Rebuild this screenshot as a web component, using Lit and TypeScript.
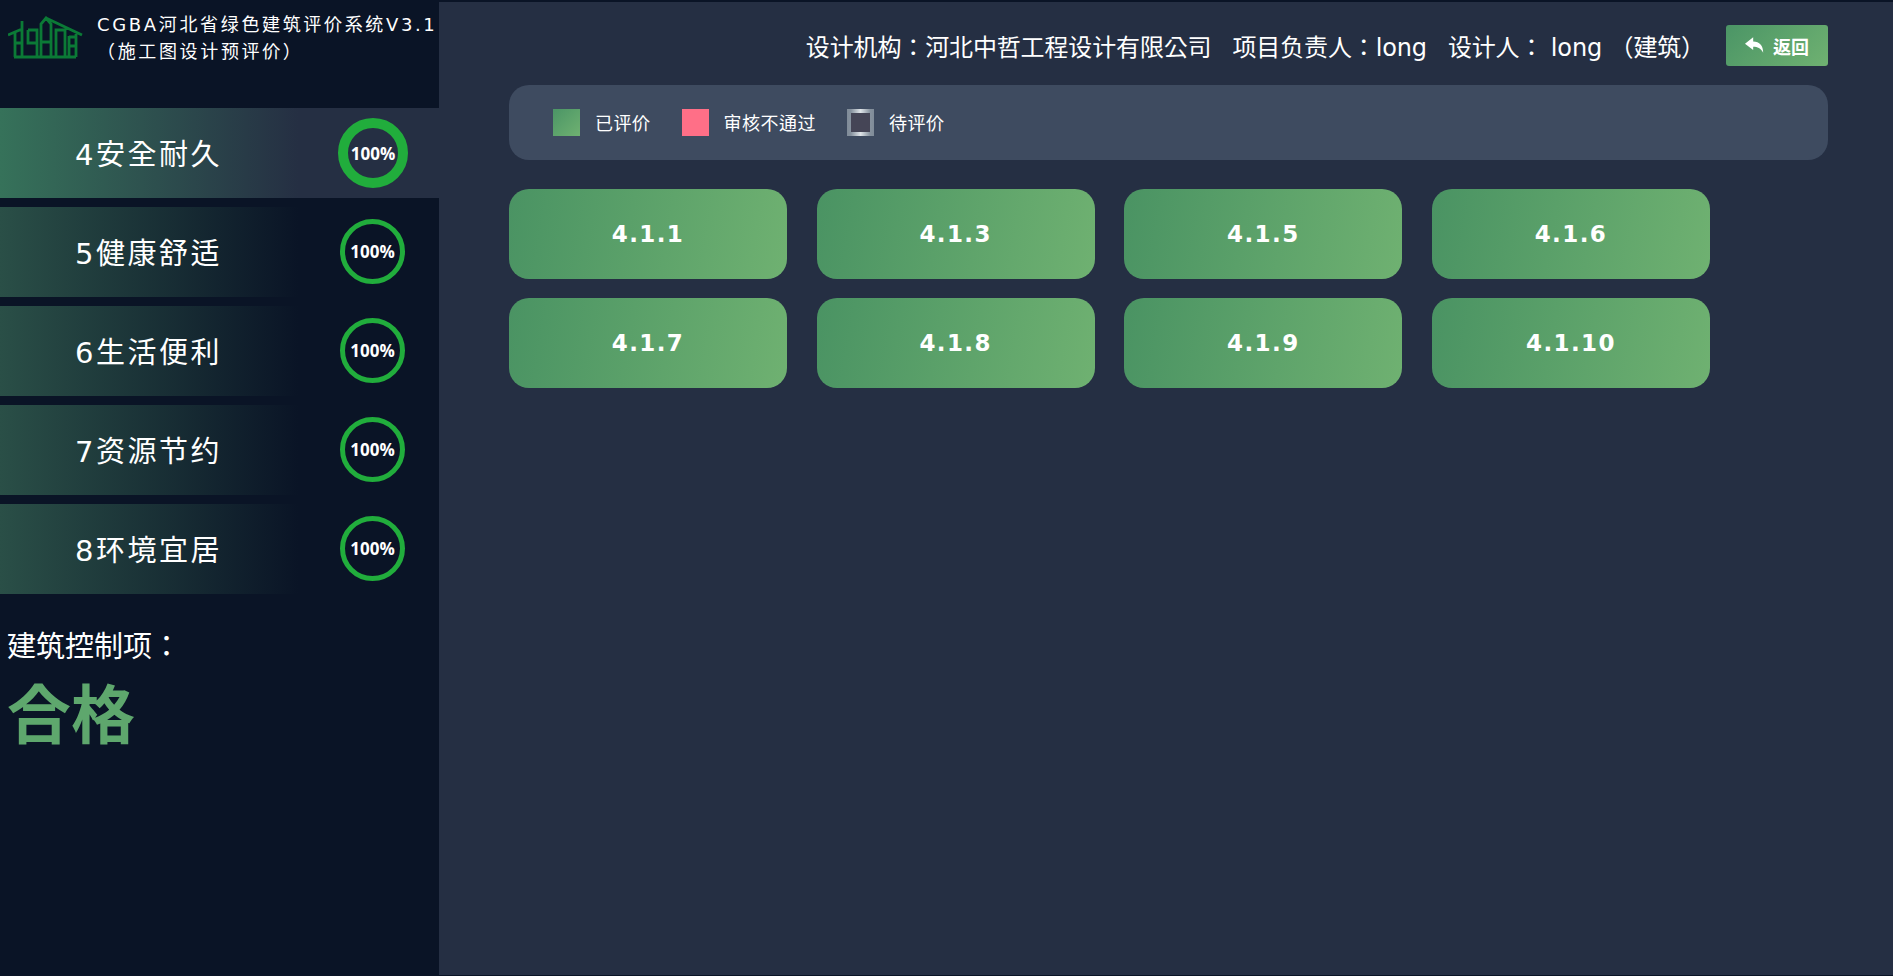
import { LitElement, html, css } from "lit";
import { customElement } from "lit/decorators.js";

const NAV = [
  { t: "4安全耐久", active: true },
  { t: "5健康舒适" },
  { t: "6生活便利" },
  { t: "7资源节约" },
  { t: "8环境宜居" },
];
const CARDS = ["4.1.1", "4.1.3", "4.1.5", "4.1.6", "4.1.7", "4.1.8", "4.1.9", "4.1.10"];

@customElement("app-root")
export class AppRoot extends LitElement {
  static styles = css`
    :host {
      display: block;
      width: 1893px;
      height: 976px;
      overflow: hidden;
      background: #0a1426;
      font-family: "DejaVu Sans", "Noto Sans CJK KR", sans-serif;
      color: #fff;
    }
    .page {
      display: flex;
      height: 973px;
      padding-top: 2px;
    }
    .side {
      width: 439px;
      flex: none;
      background: #0a1426;
    }
    .brand {
      height: 106px;
      display: flex;
      align-items: flex-start;
      box-sizing: border-box;
      padding: 9px 0 0 8px;
    }
    .logo {
      width: 75px;
      height: 43px;
      margin-top: 5px;
      flex: none;
    }
    .brand-text {
      margin-left: 14px;
      font-size: 18px;
      line-height: 27px;
      letter-spacing: 2.65px;
      white-space: nowrap;
    }
    .nav {
      display: flex;
      flex-direction: column;
      gap: 9px;
    }
    .item {
      height: 90px;
      display: flex;
      align-items: center;
      position: relative;
      background: linear-gradient(90deg, #2a4f47 0%, #0a1426 68%);
    }
    .item.active {
      background: linear-gradient(90deg, #36725a 0%, #252f43 68%);
    }
    .item-label {
      margin-left: 75px;
      padding-bottom: 2px;
      font-size: 29px;
      letter-spacing: 2.5px;
      white-space: nowrap;
    }
    .ring {
      position: absolute;
      left: 340px;
      top: 12px;
      width: 65px;
      height: 65px;
      box-sizing: border-box;
      border: 5px solid #21ad3c;
      border-radius: 50%;
      display: flex;
      align-items: center;
      justify-content: center;
      font: 700 17px "Open Sans", sans-serif;
    }
    .active .ring {
      left: 338px;
      top: 10px;
      width: 70px;
      height: 70px;
      border-width: 10px;
    }
    .status { padding: 34px 0 0 7px; }
    .status-label { font-size: 29px; line-height: 38px; white-space: nowrap; }
    .status-value {
      margin-top: 11px;
      color: #5ea76d;
      font-size: 64px;
      line-height: 78px;
      font-weight: 700;
    }
    .main {
      flex: 1;
      background: #252f43;
      box-sizing: border-box;
      padding: 23px 65px 0 70px;
    }
    .top {
      height: 41px;
      display: flex;
      align-items: center;
      justify-content: flex-end;
      font-size: 24px;
      letter-spacing: -0.14px;
      white-space: nowrap;
    }
    .top span + span { margin-left: 21px; }
    .back {
      margin-left: 21px;
      width: 102px;
      height: 41px;
      border-radius: 3px;
      display: flex;
      align-items: center;
      justify-content: center;
      gap: 8px;
      font-size: 18px;
      font-weight: 700;
      letter-spacing: 0;
      background: linear-gradient(135deg, #4b9566, #6fb171);
    }
    .back svg { width: 20px; height: 17px; flex: none; }
    .legend {
      margin-top: 19px;
      height: 75px;
      border-radius: 20px;
      background: #3e4b60;
      display: flex;
      align-items: center;
      padding-left: 44px;
      font-size: 18px;
      letter-spacing: 0.5px;
    }
    .swatch { width: 27px; height: 27px; box-sizing: border-box; margin-right: 15px; }
    .legend-item { display: flex; align-items: center; margin-right: 31px; }
    .legend-text { padding-bottom: 2px; }
    .ok { background: linear-gradient(135deg, #4b9566, #6fb171); }
    .bad { background: #ff6f87; }
    .wait {
      background: #454556;
      border: 4px solid;
      border-image: linear-gradient(90deg, #7f8b98, #dfe4e8 50%, #7f8b98) 1;
    }
    .grid {
      margin-top: 29px;
      display: grid;
      grid-template-columns: repeat(4, 278px);
      gap: 19px 29.67px;
    }
    .card {
      height: 90px;
      border-radius: 20px;
      background: linear-gradient(100deg, #4a9363, #6fb171);
      display: flex;
      align-items: center;
      justify-content: center;
      font-size: 23px;
      font-weight: 700;
      letter-spacing: 1.4px;
    }
  `;

  render() {
    return html`<div class="page">
      <aside class="side">
        <div class="brand">
          <svg class="logo" viewBox="8 16 75 43" fill="none" stroke="#0b7a36" stroke-width="2.8">
            <path d="M8 35 L22 29 M15 32 V57 M22 21 V57 M15 43 H22 M14 57 H76 M28 30 H37 V57 M28 30 V43 H37 M41 57 V24 L46 18 L51 24 V57 M41 42 H51 M46 18 L82 35 M56 57 V30 H65 V57 M69 36 V57 M69 37 H77 M69 46 H77 M76 34 V57" />
          </svg>
          <div class="brand-text">
            <div>CGBA河北省绿色建筑评价系统V3.1</div>
            <div>（施工图设计预评价）</div>
          </div>
        </div>
        <nav class="nav">
          ${NAV.map(
            (n) => html`<div class="item ${n.active ? "active" : ""}">
              <div class="item-label">${n.t}</div>
              <div class="ring">100%</div>
            </div>`
          )}
        </nav>
        <div class="status">
          <div class="status-label">建筑控制项：</div>
          <div class="status-value">合格</div>
        </div>
      </aside>
      <main class="main">
        <div class="top">
          <span>设计机构：河北中哲工程设计有限公司</span>
          <span>项目负责人：long</span>
          <span>设计人： long （建筑）</span>
          <div class="back">
            <svg viewBox="0 0 22 18"><path fill="#fff" d="M0 7 L9 0 V4.5 C16 4.5 20 9 20 17 C17 12 14 10.5 9 10.5 V14 Z"/></svg>
            返回
          </div>
        </div>
        <div class="legend">
          <div class="legend-item"><div class="swatch ok"></div><span class="legend-text">已评价</span></div>
          <div class="legend-item"><div class="swatch bad"></div><span class="legend-text">审核不通过</span></div>
          <div class="legend-item"><div class="swatch wait"></div><span class="legend-text">待评价</span></div>
        </div>
        <div class="grid">
          ${CARDS.map((c) => html`<div class="card">${c}</div>`)}
        </div>
      </main>
    </div>`;
  }
}
